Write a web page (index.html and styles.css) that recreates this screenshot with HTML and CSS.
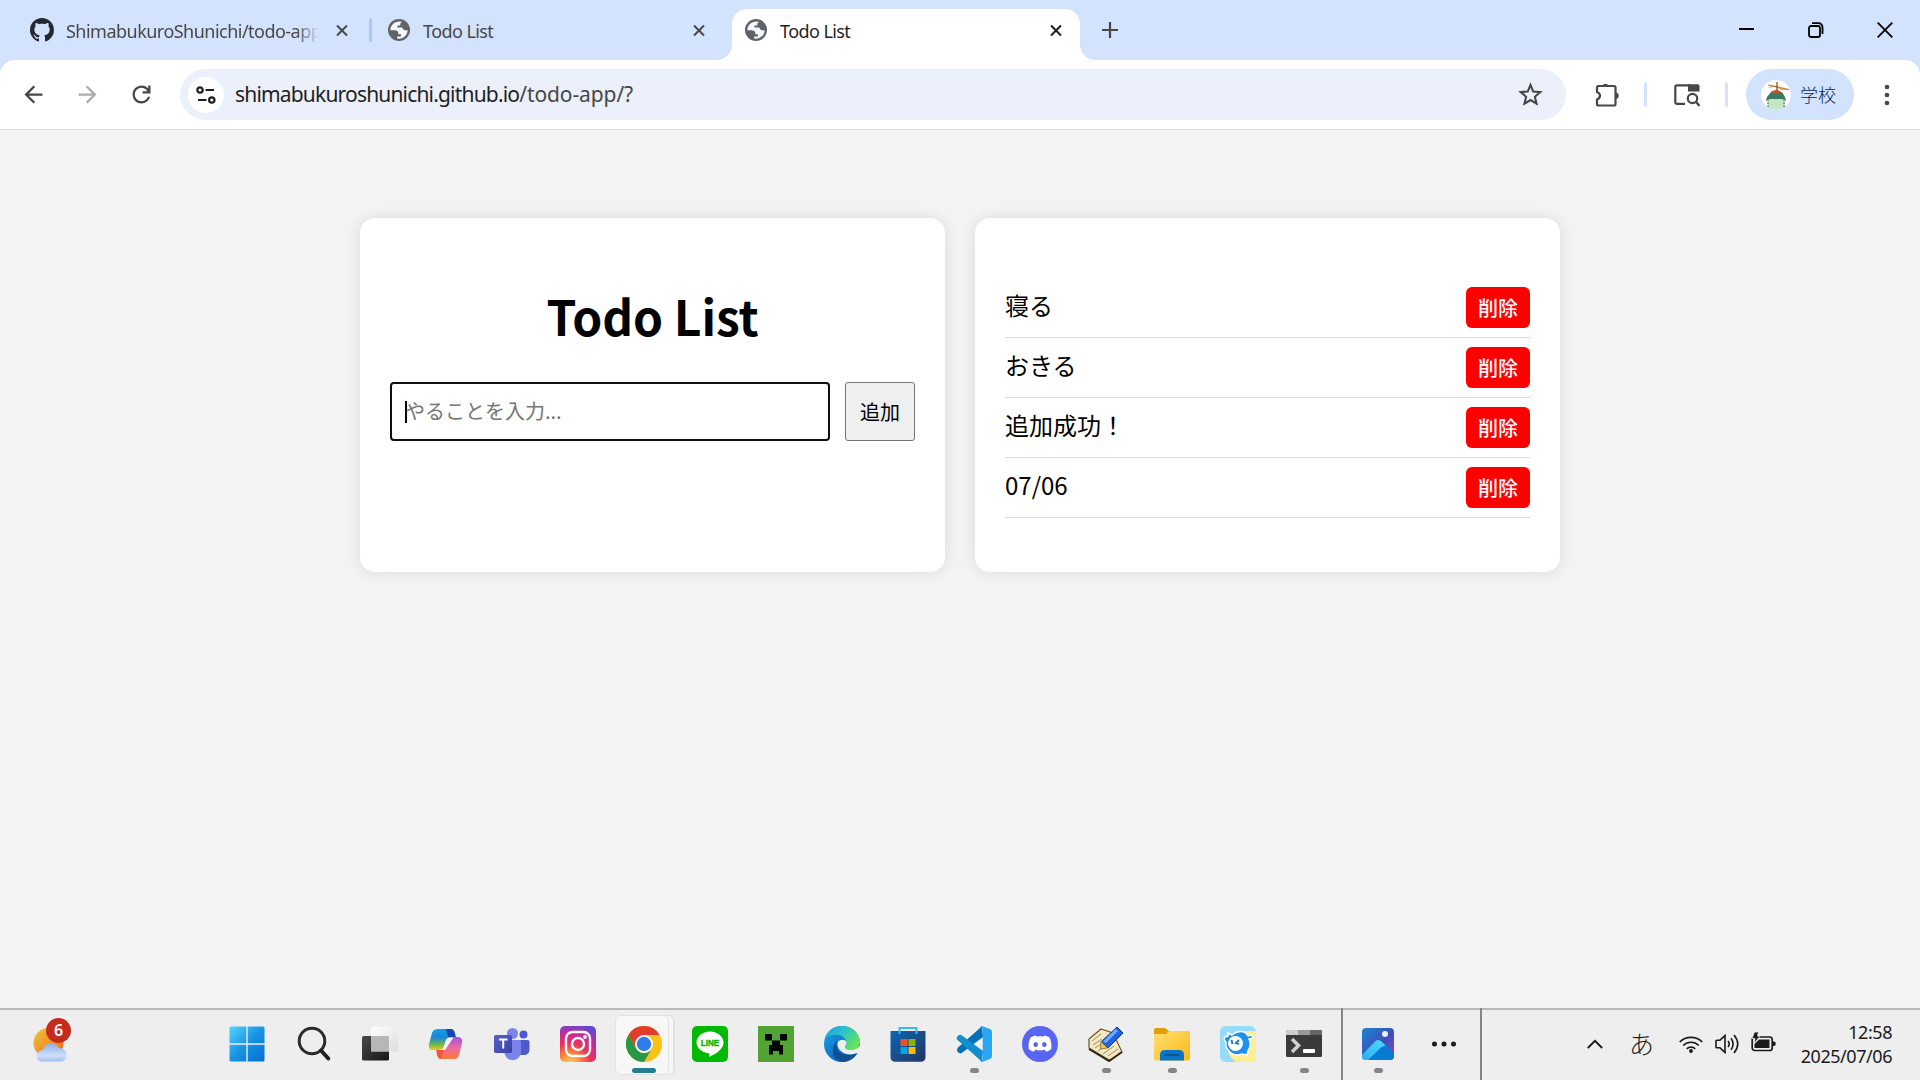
FILE: index.html
```html
<!DOCTYPE html>
<html lang="ja">
<head>
<meta charset="utf-8">
<title>Todo List</title>
<link rel="stylesheet" href="styles.css">
</head>
<body>
<svg width="0" height="0" class="defs" aria-hidden="true">
  <defs>
    <symbol id="globe" viewBox="0 0 22 22"><circle cx="11" cy="11" r="11" fill="#5f6368"/><path d="M12 2.4C6 2.2 2.3 6.5 2.3 11.3h4.2c2 0 3.8 1 3.8 2.6v1.4h2.6v2.1H9.2v2.1c5.500 1.100 10.400-3 10.400-8.300h-2.200c-1.200 0-2-.7-2.600-1.800l-.6-1H9.400V6.600h2.800c0-1.500 0-2.500 1.700-3.800z" fill="#f4f7fd"/></symbol>
    <symbol id="x" viewBox="0 0 12 12"><path d="M1 1l10 10M11 1L1 11" stroke="currentColor" stroke-width="2" fill="none"/></symbol>
    <linearGradient id="win" x1="0" y1="0" x2="1" y2="1"><stop offset="0" stop-color="#52d5ff"/><stop offset=".5" stop-color="#1993e3"/><stop offset="1" stop-color="#0070d0"/></linearGradient>
    <linearGradient id="sun" x1="0" y1="0" x2="1" y2="1"><stop offset="0" stop-color="#f0c53a"/><stop offset="1" stop-color="#f0670f"/></linearGradient>
    <linearGradient id="cloud" x1="0" y1="0" x2="0" y2="1"><stop offset="0" stop-color="#8aaee8"/><stop offset=".7" stop-color="#cfdffa"/><stop offset="1" stop-color="#9fbdf0"/></linearGradient>
    <linearGradient id="dark" x1="0" y1="0" x2="1" y2="1"><stop offset="0" stop-color="#4a4a4a"/><stop offset="1" stop-color="#161616"/></linearGradient>
    <linearGradient id="glass" x1="0" y1="0" x2="1" y2="1"><stop offset="0" stop-color="#fff"/><stop offset="1" stop-color="#ddd"/></linearGradient>
    <linearGradient id="cop1" x1="0" y1="0" x2="0" y2="1"><stop offset="0" stop-color="#109fe8"/><stop offset=".4" stop-color="#1a86d8"/><stop offset=".7" stop-color="#5fb45c"/><stop offset="1" stop-color="#f0cb10"/></linearGradient>
    <linearGradient id="cop2" x1="0" y1="0" x2="0" y2="1"><stop offset="0" stop-color="#a452e8"/><stop offset=".5" stop-color="#ee6a9a"/><stop offset="1" stop-color="#fa7a3e"/></linearGradient>
    <linearGradient id="teams" x1="0" y1="0" x2="1" y2="1"><stop offset="0" stop-color="#5a62c3"/><stop offset="1" stop-color="#3940ab"/></linearGradient>
    <radialGradient id="insta" cx=".28" cy="1.05" r="1.15"><stop offset="0" stop-color="#ffd76a"/><stop offset=".25" stop-color="#fb8c3c"/><stop offset=".5" stop-color="#ee2f5c"/><stop offset=".75" stop-color="#c52a9a"/><stop offset="1" stop-color="#5a4bd6"/></radialGradient>
    <linearGradient id="edge1" x1="0" y1="0" x2="1" y2=".6"><stop offset="0" stop-color="#1d9fe0"/><stop offset=".5" stop-color="#2cc3c8"/><stop offset="1" stop-color="#66e455"/></linearGradient>
    <linearGradient id="edge2" x1="0" y1="0" x2="1" y2="1"><stop offset="0" stop-color="#1ba4e4"/><stop offset=".6" stop-color="#0c6fca"/><stop offset="1" stop-color="#0c59a4"/></linearGradient>
    <linearGradient id="store" x1="0" y1="0" x2="1" y2="1"><stop offset="0" stop-color="#0d67b4"/><stop offset="1" stop-color="#233461"/></linearGradient>
    <linearGradient id="fold" x1="0" y1="0" x2="1" y2="1"><stop offset="0" stop-color="#ffdf74"/><stop offset="1" stop-color="#fcb915"/></linearGradient>
    <linearGradient id="photo" x1="0" y1="0" x2="1" y2="1"><stop offset="0" stop-color="#1a86d8"/><stop offset=".55" stop-color="#3d4fb5"/><stop offset="1" stop-color="#8a4fc8"/></linearGradient>
    <linearGradient id="peak" x1="0" y1="1" x2="1" y2="0"><stop offset="0" stop-color="#28a9ec"/><stop offset="1" stop-color="#4fdcfb"/></linearGradient>
  </defs>
</svg>

<header class="browser">
  <div class="tabstrip">
    <div class="tab tab-first">
      <svg class="github" viewBox="0 0 16 16"><path fill="#24292f" d="M8 0C3.580 0 0 3.580 0 8c0 3.540 2.290 6.530 5.470 7.590.4.070.55-.17.55-.38 0-.19-.01-.82-.01-1.490-2.010.37-2.530-.49-2.690-.94-.09-.23-.48-.94-.82-1.130-.28-.15-.68-.52-.01-.53.63-.01 1.080.58 1.230.82.72 1.210 1.870.87 2.330.66.070-.52.28-.87.51-1.070-1.780-.2-3.640-.89-3.640-3.950 0-.87.31-1.590.82-2.150-.08-.2-.36-1.020.08-2.120 0 0 .67-.21 2.200.82.64-.18 1.320-.27 2-.27s1.360.09 2 .27c1.530-1.040 2.200-.82 2.200-.82.44 1.100.16 1.920.08 2.120.51.56.82 1.270.82 2.150 0 3.070-1.870 3.750-3.650 3.950.29.25.54.73.54 1.480 0 1.070-.01 1.930-.01 2.200 0 .21.15.46.55.38A8.010 8.010 0 0 0 16 8c0-4.420-3.580-8-8-8z"/></svg>
      <span class="tab-title faded">ShimabukuroShunichi/todo-app</span>
      <svg class="tab-close"><use href="#x"/></svg>
    </div>
    <span class="tab-divider"></span>
    <div class="tab tab-second">
      <svg class="globe"><use href="#globe"/></svg>
      <span class="tab-title">Todo List</span>
      <svg class="tab-close"><use href="#x"/></svg>
    </div>
    <div class="tab tab-active">
      <svg class="globe"><use href="#globe"/></svg>
      <span class="tab-title">Todo List</span>
      <svg class="tab-close"><use href="#x"/></svg>
    </div>
    <svg class="new-tab" viewBox="0 0 16 16"><path d="M8 0v16M0 8h16" stroke="#474747" stroke-width="2.200"/></svg>
    <div class="window-controls">
      <svg width="16" height="16" viewBox="0 0 16 16"><path d="M0 7h15" stroke="#000" stroke-width="2"/></svg>
      <svg width="16" height="16" viewBox="0 0 16 16" fill="none" stroke="#000" stroke-width="1.800"><rect x="1" y="4" width="11" height="11" rx="2"/><path d="M4 1.200h6.500a4 4 0 0 1 4 4V12"/></svg>
      <svg width="16" height="16" viewBox="0 0 16 16"><path d="M.7.700l14.600 14.600M15.300.700L.7 15.300" stroke="#000" stroke-width="1.800"/></svg>
    </div>
  </div>
  <div class="toolbar">
    <div class="nav">
      <svg viewBox="0 0 24 24" fill="#474747"><path d="M7.825 13l5.600 5.600L12 20l-8-8 8-8 1.425 1.400-5.600 5.600H20v2z"/></svg>
      <svg viewBox="0 0 24 24" fill="#ababab"><path d="M16.175 13H4v-2h12.175l-5.600-5.600L12 4l8 8-8 8-1.425-1.400z"/></svg>
      <svg viewBox="0 0 24 24" fill="#474747"><path d="M12 20q-3.350 0-5.675-2.325T4 12t2.325-5.675T12 4q1.725 0 3.300.713T18 6.750V4h2v7h-7V9h4.200q-.8-1.400-2.187-2.200T12 6Q9.500 6 7.750 7.750T6 12t1.750 4.250T12 18q1.925 0 3.475-1.100T17.650 14h2.100q-.7 2.650-2.850 4.325T12 20"/></svg>
    </div>
    <div class="omnibox">
      <span class="site-info"><svg width="20" height="20" viewBox="0 0 20 20" fill="none" stroke="#1f1f1f" stroke-width="2.200"><circle cx="4" cy="5" r="2.700"/><path d="M9.500 5H18M2 15h8.500"/><circle cx="15.800" cy="15" r="2.700"/></svg></span>
      <span class="url">shimabukuroshunichi.github.io<span class="path">/todo-app/?</span></span>
      <svg class="star" viewBox="0 0 24 24"><path d="M12 2.800l2.600 6.300 6.800.6-5.200 4.500 1.600 6.600L12 17.300l-5.800 3.500 1.600-6.600-5.200-4.500 6.800-.6z" fill="none" stroke="#474747" stroke-width="2"/></svg>
    </div>
    <svg class="ext" viewBox="0 0 26 26"><path d="M3 5.500Q3 4 4.500 4H20q1.500 0 1.500 1.500V22q0 1.500-1.500 1.500H4.500Q3 23.500 3 22v-4.500q3-1 3-3.700T3 10z" fill="none" stroke="#474747" stroke-width="2.200"/><path d="M8.500 3.500a3.500 3.500 0 0 1 6 0zM22 10.500a3.300 3.300 0 0 1 0 6.500z" fill="#474747"/></svg>
    <span class="bar"></span>
    <svg class="tabsearch" viewBox="0 0 26 24"><path d="M11 20.800H3q-1.700 0-1.700-1.700V4q0-1.700 1.700-1.700h13" fill="none" stroke="#474747" stroke-width="2.200"/><path d="M14 1.200h9.500q2 0 2 2V8.500H14z" fill="#474747"/><circle cx="18.500" cy="15.500" r="4.700" fill="none" stroke="#474747" stroke-width="2.200"/><path d="M22 19l3.600 3.800" stroke="#474747" stroke-width="2.400"/></svg>
    <span class="bar bar-last"></span>
    <div class="profile">
      <svg width="30" height="30" viewBox="0 0 30 30"><circle cx="15" cy="15" r="15" fill="#fff"/><path d="M7 18h16l1 9q-8 5-17 1z" fill="#c3e7c0"/><path d="M10 12h11l3 5 1 4-3-2H8l-3 2 1-4z" fill="#3b7b63"/><path d="M10 11.500l6-2 5 3-10 1z" fill="#c2562a"/><path d="M7 5l9 1.500L28 9.500l-7-.2-6-2.300zM8 7.500l7-1.500" fill="#e39a35" stroke="#b9651f" stroke-width=".6"/><path d="M16 2v8" stroke="#80552f" stroke-width="1.300"/><path d="M7 19v9M23 19v9" stroke="#55675a" stroke-dasharray="2 1"/></svg>
      <span>学校</span>
    </div>
    <svg class="menu" viewBox="0 0 6 22" fill="#474747"><circle cx="3" cy="3" r="2.300"/><circle cx="3" cy="11" r="2.300"/><circle cx="3" cy="19" r="2.300"/></svg>
  </div>
</header>

<main class="page">
  <section class="card">
    <h1>Todo List</h1>
    <form class="entry">
      <div class="field"><span class="caret"></span><span class="placeholder">やることを入力...</span></div>
      <button type="button" class="add">追加</button>
    </form>
  </section>
  <section class="card">
    <ul class="todos">
      <li><span>寝る</span><button class="delete">削除</button></li>
      <li><span>おきる</span><button class="delete">削除</button></li>
      <li><span>追加成功！</span><button class="delete">削除</button></li>
      <li><span>07/06</span><button class="delete">削除</button></li>
    </ul>
  </section>
</main>

<footer class="taskbar">
  <div class="weather">
    <svg width="36" height="36" viewBox="0 0 36 36"><circle cx="15.500" cy="17" r="15" fill="url(#sun)"/><path d="M8 35.500a5 5 0 0 1-4-5.500c0-3.500 2.500-6 6-6 1-4 4-7 8-7s6.500 2 8 5c4-.5 7.500 2.500 7.500 7 0 3.500-2 6.500-5 6.500z" fill="url(#cloud)"/></svg>
    <span class="badge">6</span>
  </div>
  <div class="apps">
    <div class="app start"><svg viewBox="0 0 36 36"><path d="M2 .5h15.300v16.800H.5V2A1.500 1.500 0 0 1 2 .5zM18.700.5H34A1.500 1.500 0 0 1 35.500 2v15.300H18.700zM.5 18.700h16.800v16.800H2A1.500 1.500 0 0 1 .5 34zM18.700 18.700h16.800V34a1.500 1.500 0 0 1-1.500 1.500H18.700z" fill="url(#win)"/></svg></div>
    <div class="app"><svg viewBox="0 0 36 36"><circle cx="16" cy="15" r="12.800" fill="none" stroke="#2b2b2b" stroke-width="3"/><path d="M25 24.500l7.300 8" stroke="#222" stroke-width="4" stroke-linecap="round"/></svg></div>
    <div class="app"><svg viewBox="0 0 36 36"><rect x="0" y="10" width="27" height="24.500" rx="1.500" fill="url(#dark)"/><rect x="9" y="1" width="27" height="24.500" rx="1" fill="url(#glass)"/><path d="M9 10h18v15.500H10q-1 0-1-1z" fill="#a9a9a9" opacity=".8"/></svg></div>
    <div class="app"><svg viewBox="0 0 36 36"><path d="M7 3.500Q8.500 3 11 3h11q3.500 0 4.500 4l1 3.500h-7L16 24H4q-4-.5-3-6L4 7q1-3 3-3.500z" fill="url(#cop1)"/><path d="M18 3h5q3 0 4 4.500l.8 3.500H20z" fill="#1745b5"/><path d="M20 11h10q5 .5 4 6l-3 12q-1 4-5 4H14q-3.500 0-4.500-4L8 24h8z" fill="url(#cop2)"/><path d="M20.500 11.500h5L17 24h-5q3-.5 4-4l1.500-5q1-3 3-3.500z" fill="#f7f5fa"/><path d="M8.500 24H16l-3 9q-3 0-4-4z" fill="#ee583c"/></svg></div>
    <div class="app"><svg viewBox="0 0 36 36"><circle cx="18.500" cy="7.500" r="5.500" fill="#7b83eb"/><circle cx="29.500" cy="8.500" r="4" fill="#5059c9"/><path d="M22 14h11.500q2 0 2 2v7q0 6-6 6H22z" fill="#5059c9"/><path d="M10.500 14H25q2 0 2 2v10a8.300 8.300 0 0 1-16.600 0z" fill="#7b83eb"/><rect y="9" width="18" height="18" rx="1.800" fill="url(#teams)"/><path d="M5 13.500h8.500M9.200 13.500v9" stroke="#fff" stroke-width="2"/></svg></div>
    <div class="app"><svg viewBox="0 0 36 36"><rect width="36" height="36" rx="5" fill="url(#insta)"/><g fill="none" stroke="#fff" stroke-width="2.400"><rect x="6" y="6" width="24" height="24" rx="6.500"/><circle cx="18" cy="18" r="6"/></g><circle cx="25" cy="11" r="1.900" fill="#fff"/></svg></div>
    <div class="app focused"><svg viewBox="0 0 36 36"><circle cx="18" cy="18" r="18" fill="#fbc116"/><path d="M18 0A18 18 0 0 1 33.600 9H18L10.200 22.500 2.400 9A18 18 0 0 1 18 0z" fill="#e33b2e"/><path d="M2.400 9l7.800 13.500A9 9 0 0 0 25.800 22.500L18 36A18 18 0 0 1 2.400 9z" fill="#279847"/><circle cx="18" cy="18" r="9" fill="#fff"/><circle cx="18" cy="18" r="7.200" fill="#2f7ceb"/></svg></div>
    <div class="app line"><svg viewBox="0 0 36 36"><rect width="36" height="36" rx="5" fill="#00b900"/><path d="M18 5.500c-7.700 0-13.500 5-13.500 11 0 5.500 5 9.700 12 10.700 1.500.3.800 2.300.5 3.800 5-2.200 14.500-7 14.500-14.500 0-6-6-11-13.500-11z" fill="#fff"/><text x="18" y="19.800" text-anchor="middle" textLength="18.500" lengthAdjust="spacingAndGlyphs">LINE</text></svg></div>
    <div class="app"><svg viewBox="0 0 36 36"><rect width="36" height="36" fill="#52a535"/><path d="M7 8h7v6.500H7zM22 8h7v6.500h-7zM14 14.500h8V19h3v9.500h-4V25h-6v3.500h-4V19h3z" fill="#000"/></svg></div>
    <div class="app"><svg viewBox="0 0 36 36"><circle cx="18" cy="18" r="18" fill="url(#edge2)"/><path d="M1 12C4 3 12-.5 19 .1 29 .5 36 8 36 16c0 5-4 8-9 8-4 0-6-1.500-6-3 0-1 1.500-1.500 1.500-4C22 11 16 8 10 9c-4 .5-7 1.500-9 3z" fill="url(#edge1)"/><path d="M13.500 15C10 22 15 29 24 29c4 0 7-1 9-2-3 6-9 9-15 9-7-2-10-7-9-13 .5-4 2-7 4.500-8z" fill="#114f91"/><path d="M14 16c2-3 7-3 8.500 0 .5 3-2 4-1.500 5.500 1 3 7 3.500 12.500.5l3-3v6l-3 2c-8 3-16 1-19-5-1-2-1.500-4-.5-6z" fill="#eee"/></svg></div>
    <div class="app"><svg viewBox="0 0 36 36"><path d="M.5 5h35v26q0 4.800-4.800 4.800H5.300Q.5 35.800.5 31z" fill="url(#store)"/><path d="M9.500 8V2h17v6" fill="none" stroke="#35b9f2" stroke-width="2"/><path d="M10.500 13h7v7h-7z" fill="#f25022"/><path d="M18.500 13h7v7h-7z" fill="#7fba00"/><path d="M10.500 21h7v7h-7z" fill="#00a4ef"/><path d="M18.500 21h7v7h-7z" fill="#ffb900"/></svg></div>
    <div class="app running"><svg viewBox="0 0 36 36"><path d="M26 .3L2 21.500Q-.5 24.500 3 27l2 .5L27 11z" fill="#0070b8"/><path d="M26 35.700L1.500 14Q-.5 11.500 3 9l2-.2L27 25z" fill="#118dd0"/><path d="M26 0l8 3q2 .8 2 3v24q0 2-2 3l-8 3q-1.500 0-2-1.500 2 .2 2.700-1.500V3q-.7-1.500-2.700-1.500Q24.500 0 26 0z" fill="#2aa7f2"/></svg></div>
    <div class="app"><svg viewBox="0 0 36 36"><circle cx="18" cy="18" r="18" fill="#5865f2"/><path d="M14.500 10.500q3.500-.7 7 0l.8-1q3 .5 5 1.700Q30 16 29.300 23q-2.300 2-5.300 2.800l-1.300-2q-4.700 1.200-9.400 0l-1.300 2Q9 25 6.700 23 6 16 8.700 11.200q2-1.200 5-1.700z" fill="#fff"/><ellipse cx="13.700" cy="18.500" rx="2.300" ry="2.500" fill="#5865f2"/><ellipse cx="22.300" cy="18.500" rx="2.300" ry="2.500" fill="#5865f2"/></svg></div>
    <div class="app running"><svg viewBox="0 0 36 36"><path d="M1 13l12-10 12 4 9 19-12 8.500L1 22z" fill="#f3e9c4" stroke="#6d5728" stroke-width="1.200"/><path d="M1 23l20 12L34 26" fill="none" stroke="#33240e" stroke-width="2"/><path d="M4 15l9-7M5 19l9-6M7 22l11-7M10 25l12-8M15 28l11-8M20 30l10-7" stroke="#a58a55" stroke-width="1"/><path d="M29 1l6 6-15 15-7-6z" fill="#2163e8" stroke="#12348c"/><path d="M27.500 3l2.500 2-12 12-3-1.500z" fill="#6faaf8"/><path d="M13 15.500l6.500 6.500-7 1z" fill="#f2c84a" stroke="#6d5728" stroke-width=".7"/></svg></div>
    <div class="app running"><svg viewBox="0 0 36 36"><path d="M0 4q0-2 2-2h8.500q1.500 0 2.500 1.500L15 5h19q2 0 2 2v5H0z" fill="#dea10b"/><path d="M0 8h12l3-3h19.500Q36 5 36 7v25.500q0 2-2 2H2q-2 0-2-2z" fill="url(#fold)"/><path d="M6 34.500V29q0-5 5-5h14q5 0 5 5v5.500z" fill="#0c74c8"/><path d="M11 29h14" stroke="#084d8c" stroke-width="1.500" stroke-linecap="round"/></svg></div>
    <div class="app"><svg viewBox="0 0 36 36"><rect width="36" height="36" rx="6" fill="#94dcfb"/><path d="M36 5v25q0 6-6 6H16Q10 32 8 26L20 5z" fill="#fbee94"/><path d="M8 7l4 2q7-6 14-2l2 3 4-1 1 3-4 1q3 6-1 12l-1 4-5-1q-8 3-13-3-4-4-3-9-3-2-1-5l3-1z" fill="#1b93ee" stroke="#fff" stroke-width="1.500"/><circle cx="15.500" cy="17.500" r="7.500" fill="#fff"/><path d="M11.500 14l1 4M19 14l-3 3 3 1" stroke="#1680d5" stroke-width="2" fill="none"/></svg></div>
    <div class="app running"><svg viewBox="0 0 36 36"><rect y="4" width="36" height="27" rx="1.500" fill="#3b3b3b"/><path d="M0 9V5.500Q0 4 1.500 4H12v5z" fill="#ccc"/><path d="M12 4h12v5H12z" fill="#999"/><path d="M24 4h10.500Q36 4 36 5.500V9H24z" fill="#666"/><path d="M6 13l6.500 6.500L6 26" fill="none" stroke="#d0d0d0" stroke-width="3.500"/><rect x="17" y="23" width="12" height="4" rx=".7" fill="#fff"/></svg></div>
  </div>
  <div class="recent">
    <div class="app running"><svg viewBox="0 0 36 36"><clipPath id="pclip"><rect x="2" y="2" width="32" height="32" rx="4"/></clipPath><g clip-path="url(#pclip)"><rect x="2" y="2" width="32" height="32" fill="url(#photo)"/><path d="M18 16l6 1 12 13v6H5z" fill="#087bd2"/><path d="M1 30l13.500-14q3.500-4 7.500 0l3.500 3.500-4 1.500L6 36z" fill="url(#peak)"/></g><circle cx="25" cy="8" r="3" fill="#e9eefb"/></svg></div>
    <div class="app"><svg viewBox="0 0 36 36" fill="#1b1b1b"><circle cx="8.500" cy="18" r="2.500"/><circle cx="18" cy="18" r="2.500"/><circle cx="27.500" cy="18" r="2.500"/></svg></div>
  </div>
  <div class="tray">
    <svg width="16" height="10" viewBox="0 0 16 10"><path d="M.8 9L8 1.800 15.200 9" fill="none" stroke="#1b1b1b" stroke-width="1.900"/></svg>
    <span class="ime">あ</span>
    <svg class="wifi" width="24" height="18" viewBox="0 0 24 18" fill="none" stroke="#1b1b1b" stroke-width="1.700"><path d="M.7 7a16 16 0 0 1 22.600 0M4.200 10.500a11 11 0 0 1 15.600 0M7.700 13.800a6.200 6.200 0 0 1 8.600 0"/><circle cx="12" cy="16" r="1.900" fill="#1b1b1b" stroke="none"/></svg>
    <svg class="vol" width="24" height="20" viewBox="0 0 24 20" fill="none" stroke="#1b1b1b" stroke-width="1.600"><path d="M1 7q0-.8.800-.8H5l5-4.700v17l-5-4.700H1.800Q1 13.800 1 13zM13 7q2.400 3 0 6M16 4.200q4.200 5.800 0 11.600M19 1q7.500 9 0 18"/></svg>
    <svg class="battery" width="25" height="20" viewBox="0 0 25 20"><rect x="1.200" y="5" width="20" height="13.500" rx="2.500" fill="none" stroke="#1b1b1b" stroke-width="1.700"/><path d="M22 9.500h1.200q1.500 0 1.500 2.200t-1.500 2.200H22z" fill="#1b1b1b"/><path d="M8 7.500h10.500v8.500H3.500v-4z" fill="#1b1b1b"/><path d="M3.500 0h4L6.500 4H9L3 12l1-5.500H1z" fill="#1b1b1b" stroke="#eee" stroke-width=".8"/></svg>
    <div class="clock"><span>12:58</span><span>2025/07/06</span></div>
  </div>
</footer>
</body>
</html>
```
FILE: styles.css
```css
* { box-sizing: border-box; }
body {
  margin: 0;
  width: 1920px;
  height: 1080px;
  overflow: hidden;
  display: flex;
  flex-direction: column;
  background: #f3f3f3;
  color: #000;
  font-family: "Noto Sans CJK JP", sans-serif;
}
svg { display: block; flex: none; }
.defs { position: absolute; }

/* Browser chrome */
.browser {
  height: 130px;
  flex: none;
  background: #d3e3fd;
  font-family: "Noto Sans", "Noto Sans CJK JP", sans-serif;
}
.tabstrip { height: 60px; display: flex; align-items: center; }
.tab {
  height: 60px;
  display: flex;
  align-items: center;
  color: #474747;
  font-size: 18px;
}
.tab-title { flex: 1; margin-right: 13px; white-space: nowrap; overflow: hidden; padding-top: 2px; letter-spacing: -0.58px; }
.faded {
  margin-right: 17px;
  letter-spacing: -0.52px;
  -webkit-mask-image: linear-gradient(to right, #000 91%, transparent);
  mask-image: linear-gradient(to right, #000 91%, transparent);
}
.tab-close { width: 12px; height: 13px; }
.github { width: 24px; height: 24px; margin-right: 12px; }
.globe { width: 22px; height: 22px; margin-right: 13px; }
.tab-first { width: 369px; padding: 0 21px 0 30px; }
.tab-divider { width: 3px; height: 24px; background: #a8c7fa; border-radius: 2px; }
.tab-second { width: 360px; padding: 0 27px 0 16px; }
.tab-active {
  width: 348px;
  height: 51px;
  margin-top: 9px;
  padding: 0 18px 9px 13px;
  background: #fff;
  border-radius: 15px 15px 0 0;
  color: #1f1f1f;
  position: relative;
}
.tab-active::before,
.tab-active::after {
  content: "";
  position: absolute;
  bottom: 0;
  width: 15px;
  height: 15px;
}
.tab-active::before { left: -15px; background: radial-gradient(circle at 0 0, transparent 14.500px, #fff 15px); }
.tab-active::after { right: -15px; background: radial-gradient(circle at 100% 0, transparent 14.500px, #fff 15px); }
.new-tab { width: 16px; height: 16px; margin-left: 22px; }
.window-controls { margin-left: auto; margin-right: 27px; display: flex; gap: 53px; }

.toolbar {
  height: 70px;
  display: flex;
  align-items: center;
  background: #fff;
  border-radius: 15px 15px 0 0;
  border-bottom: 1px solid #dcdcdc;
}
.nav { display: flex; gap: 27px; margin-left: 19.500px; }
.nav svg { width: 27px; height: 27px; }
.omnibox {
  width: 1386px;
  height: 51px;
  margin-left: 25.500px;
  padding: 0 23px 0 8px;
  display: flex;
  align-items: center;
  border-radius: 26px;
  background: #ecf0fa;
}
.site-info {
  width: 36px;
  height: 36px;
  border-radius: 50%;
  background: #fff;
  display: grid;
  place-items: center;
}
.url { flex: 1; margin-left: 11px; font-size: 21px; color: #1f1f1f; letter-spacing: -0.82px; margin-top: -1px; }
.path { color: #474747; letter-spacing: -0.1px; }
.star { width: 25px; height: 25px; }
.ext { width: 26px; height: 26px; margin-left: 28px; }
.bar { width: 3px; height: 25px; border-radius: 2px; background: #d3e3fd; margin-left: 24px; }
.bar-last { margin-left: 25px; }
.tabsearch { width: 26px; height: 24px; margin-left: 27px; }
.profile {
  width: 108px;
  height: 51px;
  margin-left: 18px;
  padding-left: 15px;
  display: flex;
  align-items: center;
  gap: 9px;
  border-radius: 26px;
  background: #d3e3fd;
  color: #062554;
  font-family: "Noto Sans CJK JP", sans-serif;
  font-size: 18px;
  font-weight: 300;
}
.profile span { margin-top: -2px; }
.menu { width: 6px; height: 22px; margin-left: 30px; }

/* Todo page */
.page {
  flex: 1;
  display: flex;
  justify-content: center;
  align-items: flex-start;
  gap: 30px;
  padding-top: 88px;
}
.card {
  width: 585px;
  height: 354px;
  padding: 30px;
  background: #fff;
  border-radius: 15px;
  box-shadow: 0 0 15px rgba(0, 0, 0, .1);
}
h1 { margin: 32px 0; font-size: 48px; line-height: 71px; font-weight: 700; text-align: center; letter-spacing: -0.1px; }
.entry { display: flex; gap: 15px; margin-top: -1px; }
.field {
  flex: 1;
  height: 59px;
  display: flex;
  align-items: center;
  padding-left: 13px;
  border: 2px solid #101010;
  outline: 1px solid rgba(16, 16, 16, .3);
  outline-offset: -1px;
  border-radius: 4px;
  font-size: 20px;
  color: #757575;
}
.caret { width: 2px; height: 22px; background: #000; margin: 0 -2px 0 0; }
.placeholder { margin-top: -3px; }
.add {
  width: 70px;
  height: 59px;
  padding: 0;
  font: 20px "Noto Sans CJK JP", sans-serif;
  color: #000;
  background: #efefef;
  border: 1px solid #767676;
  border-radius: 3px;
}
.todos { margin: 30px 0 0; padding: 0; list-style: none; }
.todos li {
  height: 60px;
  display: flex;
  justify-content: space-between;
  align-items: center;
  border-bottom: 1px solid #ddd;
  font-size: 24px;
}
.todos span { margin-top: -7px; }
.delete {
  width: 64px;
  height: 41px;
  padding: 0;
  border: 0;
  border-radius: 6px;
  background: #f00;
  color: #fff;
  font: 500 20px "Noto Sans CJK JP", sans-serif;
}

/* Taskbar */
.taskbar {
  height: 72px;
  flex: none;
  display: flex;
  background: #eee;
  border-top: 2px solid #b9b9b9;
}
.weather { width: 214px; padding: 16px 0 0 33px; position: relative; }
.badge {
  position: absolute;
  left: 46px;
  top: 8px;
  width: 25px;
  height: 25px;
  border-radius: 50%;
  background: #c42b1c;
  color: #fff;
  font: 600 16px/25px "Noto Sans", sans-serif;
  text-align: center;
}
.apps { display: flex; width: 1127px; }
.app { width: 66px; height: 70px; padding: 16px 0 0 16px; position: relative; flex: none; }
.start { padding-left: 14.500px; }
.app svg { width: 36px; height: 36px; position: relative; }
.running::after,
.focused::after {
  content: "";
  position: absolute;
  left: 30px;
  top: 58px;
  width: 9px;
  height: 5px;
  border-radius: 3px;
  background: #858585;
}
.focused::after { left: 22px; width: 24px; background: #24808f; }
.focused::before {
  content: "";
  position: absolute;
  left: 5px;
  top: 5px;
  width: 52px;
  height: 58px;
  border: 1px solid #e2e2e2;
  border-radius: 6px;
  background: #f7f7f7;
  box-shadow: 5px 0 0 -1px #f7f7f7, 6px 0 0 0 #e2e2e2;
}
.line text { font: 700 8.500px "Liberation Sans", sans-serif; fill: #00b900; stroke: #00b900; stroke-width: .4px; }
.recent {
  width: 141px;
  display: flex;
  padding-left: 1px;
  border-left: 2px solid #858585;
  border-right: 2px solid #858585;
  margin-top: -2px;
  padding-top: 2px;
}
.tray { flex: 1; display: flex; align-items: center; padding: 0 28px 2px 105px; color: #1b1b1b; }
.ime { width: 24px; margin-left: 27px; font-size: 25px; line-height: 30px; font-weight: 300; white-space: nowrap; text-indent: -1px; margin-top: -2px; }
.wifi { margin-left: 25px; }
.vol { margin-left: 12px; }
.battery { margin-left: 12px; margin-top: -4px; }
.clock {
  margin-left: auto;
  margin-top: -1px;
  display: flex;
  flex-direction: column;
  text-align: right;
  font: 18px/24px "Noto Sans", sans-serif;
  letter-spacing: -0.45px;
}
```
